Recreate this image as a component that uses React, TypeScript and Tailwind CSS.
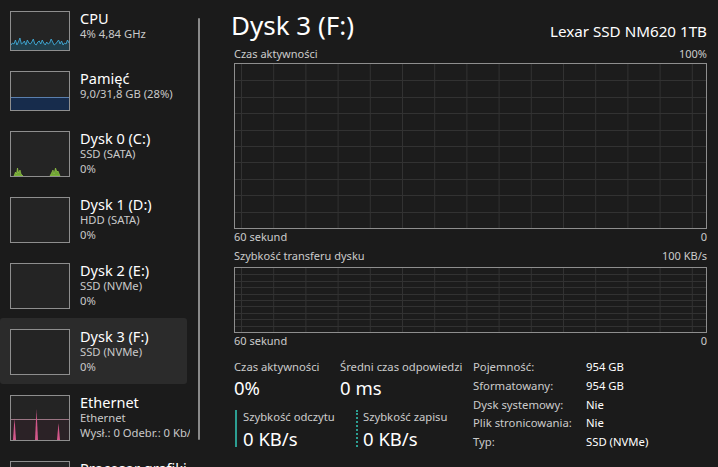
import React from 'react';

const F = "font-['Noto_Sans',sans-serif]";

function Thumb({ h, children }: { h: string; children?: React.ReactNode }) {
  return (
    <div className={`w-[60px] ${h} shrink-0 border border-[#8e8e8e] bg-[#242424] overflow-hidden`}>
      {children}
    </div>
  );
}

const cpuY = [33, 31, 32, 28, 33, 30, 26, 32, 31, 29, 33, 28, 31, 32, 30, 27, 32, 33, 30, 29, 32, 28, 31, 33, 30, 32, 31, 27, 30, 33, 32, 30, 28, 32, 29, 33, 31, 32, 28, 31];

function CpuGraph() {
  const pts = cpuY.map((y, i) => `${((i * 58) / (cpuY.length - 1)).toFixed(2)},${y}`).join(' ');
  return (
    <svg viewBox="0 0 58 38" preserveAspectRatio="none" className="block w-full h-full">
      <polygon points={`0,38 ${pts} 58,38`} fill="#1f5f7a" fillOpacity="0.45" />
      <polyline points={pts} fill="none" stroke="#3fa9d6" strokeWidth="0.9" />
    </svg>
  );
}

function MemGraph() {
  return (
    <svg viewBox="0 0 58 38" preserveAspectRatio="none" className="block w-full h-full">
      <rect x="0" y="25" width="58" height="13" fill="#172c4c" />
      <line x1="0" y1="25.5" x2="58" y2="25.5" stroke="#5a7fae" strokeWidth="1" />
    </svg>
  );
}

function Disk0Graph() {
  return (
    <svg viewBox="0 0 58 44" preserveAspectRatio="none" className="block w-full h-full">
      <polygon points="3,44 4.5,40 5.5,42 6.5,36 7.5,41 9,38 10,42 12,44" fill="#6fa534" stroke="#9ccf4c" strokeWidth="0.6" />
      <polygon points="39,44 40.5,41 42,38 43,42 44.5,36 46,40 47,39 49,44" fill="#6fa534" stroke="#9ccf4c" strokeWidth="0.6" />
    </svg>
  );
}

function EthGraph() {
  return (
    <svg viewBox="0 0 58 44" preserveAspectRatio="none" className="block w-full h-full">
      <rect x="0" y="24" width="58" height="20" fill="#3a1f2a" fillOpacity="0.35" />
      <line x1="0" y1="23.5" x2="58" y2="23.5" stroke="#b98a9c" strokeWidth="0.8" />
      <polygon points="2,44 3.5,22 5,44" fill="#d2578a" />
      <polygon points="24,44 25.5,13 27,44" fill="#d2578a" />
      <polygon points="46,44 47.5,27 49,44" fill="#d2578a" />
    </svg>
  );
}

type Item = {
  title: string;
  lines: string[];
  rowH: string;
  thumbH: string;
  graph?: React.ReactNode;
  selected?: boolean;
};

const items: Item[] = [
  { title: 'CPU', lines: ['4% 4,84 GHz'], rowH: 'h-[60px]', thumbH: 'h-[40px]', graph: <CpuGraph /> },
  { title: 'Pamięć', lines: ['9,0/31,8 GB (28%)'], rowH: 'h-[60px]', thumbH: 'h-[40px]', graph: <MemGraph /> },
  { title: 'Dysk 0 (C:)', lines: ['SSD (SATA)', '0%'], rowH: 'h-[66px]', thumbH: 'h-[46px]', graph: <Disk0Graph /> },
  { title: 'Dysk 1 (D:)', lines: ['HDD (SATA)', '0%'], rowH: 'h-[66px]', thumbH: 'h-[46px]' },
  { title: 'Dysk 2 (E:)', lines: ['SSD (NVMe)', '0%'], rowH: 'h-[66px]', thumbH: 'h-[46px]' },
  { title: 'Dysk 3 (F:)', lines: ['SSD (NVMe)', '0%'], rowH: 'h-[66px]', thumbH: 'h-[46px]', selected: true },
  { title: 'Ethernet', lines: ['Ethernet', 'Wysł.: 0 Odebr.: 0 Kb/s'], rowH: 'h-[66px]', thumbH: 'h-[46px]', graph: <EthGraph /> },
  { title: 'Procesor grafiki 0', lines: ['NVIDIA GeForce', '1%'], rowH: 'h-[66px]', thumbH: 'h-[46px]' },
];

function SideRow({ it }: { it: Item }) {
  return (
    <div
      className={`flex shrink-0 w-[187px] pl-[10px] pt-[11px] ${it.rowH} ${it.selected ? 'bg-[#2b2b2b] rounded-[3px]' : ''}`}
    >
      <Thumb h={it.thumbH}>{it.graph}</Thumb>
      <div className="ml-[10px] flex flex-col whitespace-nowrap">
        <div className="-mt-[1px] text-[14.5px] leading-[16px] text-white">{it.title}</div>
        {it.lines.map((l, i) => (
          <div key={i} className="text-[11.25px] leading-[15px] text-[#c9c9c9]">
            {l}
          </div>
        ))}
      </div>
    </div>
  );
}

function Grid({ h, rows }: { h: number; rows: number }) {
  const w = 471;
  const vs: number[] = [];
  for (let x = 6; x < w; x += 32.2) vs.push(x);
  const hs: number[] = [];
  for (let k = 1; k < rows; k++) hs.push((k * h) / rows);
  return (
    <svg viewBox={`0 0 ${w} ${h}`} preserveAspectRatio="none" className="block w-full h-full">
      {vs.map((x, i) => (
        <line key={'v' + i} x1={x + 0.5} y1={0} x2={x + 0.5} y2={h} stroke="#323232" strokeWidth="1" />
      ))}
      {hs.map((y, i) => (
        <line key={'h' + i} x1={0} y1={Math.round(y) + 0.5} x2={w} y2={Math.round(y) + 0.5} stroke="#323232" strokeWidth="1" />
      ))}
    </svg>
  );
}

function LabelRow({ left, right, cls }: { left: string; right: string; cls?: string }) {
  return (
    <div className={`flex justify-between text-[11px] leading-[16px] text-[#cbcbcb] ${cls ?? ''}`}>
      <span>{left}</span>
      <span>{right}</span>
    </div>
  );
}

export default function App() {
  return (
    <div className={`${F} w-[718px] h-[467px] overflow-hidden bg-[#1b1b1b] flex`}>
      {/* sidebar */}
      <div className="w-[190px] h-full overflow-hidden flex flex-col shrink-0">
        {items.map((it, i) => (
          <SideRow key={i} it={it} />
        ))}
      </div>
      <div className="ml-[8px] mt-[18px] h-[422px] w-[2px] rounded-full bg-[#8a8a8a] shrink-0" />

      {/* main */}
      <div className="flex-1 pl-[34px] pr-[11px] flex flex-col">
        <div className="h-[46px] flex justify-between items-start">
          <div className="-ml-[3px] mt-[9px] text-[26px] leading-[32px] text-white">Dysk 3 (F:)</div>
          <div className="mt-[21px] text-[15.2px] leading-[20px] text-white">Lexar SSD NM620 1TB</div>
        </div>
        <LabelRow left="Czas aktywności" right="100%" cls="mb-[1px]" />
        <div className="h-[166px] border border-[#8e8e8e] bg-[#1c1c1c]">
          <Grid h={164} rows={10} />
        </div>
        <LabelRow left="60 sekund" right="0" />
        <LabelRow left="Szybkość transferu dysku" right="100 KB/s" cls="mt-[3px]" />
        <div className="mt-[3px] h-[66px] border border-[#8e8e8e] bg-[#1c1c1c]">
          <Grid h={64} rows={10} />
        </div>
        <LabelRow left="60 sekund" right="0" />

        <div className="flex mt-[10px]">
          <div className="w-[239px] flex flex-col">
            <div className="flex">
              <div className="w-[106px]">
                <div className="text-[11.25px] leading-[16px] text-[#cbcbcb]">Czas aktywności</div>
                <div className="text-[18.5px] leading-[26px] text-white">0%</div>
              </div>
              <div>
                <div className="text-[11.25px] leading-[16px] text-[#cbcbcb] whitespace-nowrap">Średni czas odpowiedzi</div>
                <div className="text-[18.5px] leading-[26px] text-white">0 ms</div>
              </div>
            </div>
            <div className="flex mt-[8px]">
              <div className="w-[122px] flex">
                <div className="ml-[1px] mt-[1px] w-[2px] h-[37px] bg-[#2c9e92]" />
                <div className="ml-[6px]">
                  <div className="text-[11.25px] leading-[16px] text-[#cbcbcb] whitespace-nowrap">Szybkość odczytu</div>
                  <div className="mt-[1px] text-[18.5px] leading-[26px] text-white">0 KB/s</div>
                </div>
              </div>
              <div className="flex">
                <div className="mt-[1px] h-[37px] border-l-2 border-dotted border-[#2c9e92]" />
                <div className="ml-[5px]">
                  <div className="text-[11.25px] leading-[16px] text-[#cbcbcb] whitespace-nowrap">Szybkość zapisu</div>
                  <div className="mt-[1px] text-[18.5px] leading-[26px] text-white">0 KB/s</div>
                </div>
              </div>
            </div>
          </div>
          <div className="-mt-[1px] grid grid-cols-[113px_auto] text-[11.3px] leading-[17.7px] whitespace-nowrap">
            <div className="text-[#cbcbcb]">Pojemność:</div>
            <div className="text-white">954 GB</div>
            <div className="text-[#cbcbcb]">Sformatowany:</div>
            <div className="text-white">954 GB</div>
            <div className="text-[#cbcbcb]">Dysk systemowy:</div>
            <div className="text-white">Nie</div>
            <div className="text-[#cbcbcb]">Plik stronicowania:</div>
            <div className="text-white">Nie</div>
            <div className="text-[#cbcbcb]">Typ:</div>
            <div className="text-white">SSD (NVMe)</div>
          </div>
        </div>
      </div>
    </div>
  );
}
